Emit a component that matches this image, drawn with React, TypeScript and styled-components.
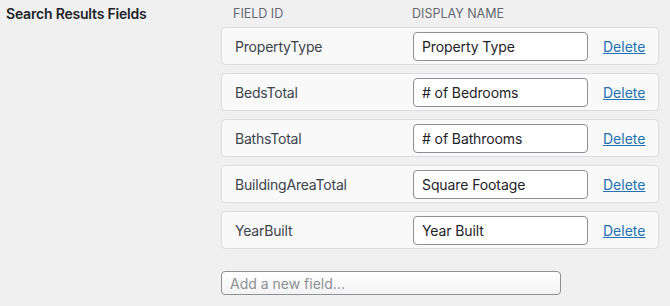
import styled, { createGlobalStyle } from 'styled-components';

const GlobalStyle = createGlobalStyle`
  html, body {
    margin: 0;
    padding: 0;
    background: #f0f0f1;
    font-family: Inter, "Noto Sans", "Liberation Sans", sans-serif;
    color: #1d2327;
  }
`;

const fields = [
  { id: 'PropertyType', name: 'Property Type' },
  { id: 'BedsTotal', name: '# of Bedrooms' },
  { id: 'BathsTotal', name: '# of Bathrooms' },
  { id: 'BuildingAreaTotal', name: 'Square Footage' },
  { id: 'YearBuilt', name: 'Year Built' },
];

export default function App() {
  return (
    <>
      <GlobalStyle />
      <Page>
        <Label>Search Results Fields</Label>
        <Fields>
          <HeaderRow>
            <HeaderCell>Field ID</HeaderCell>
            <HeaderCell>Display Name</HeaderCell>
          </HeaderRow>
          <List>
            {fields.map((f) => (
              <FieldRow key={f.id}>
                <FieldId>{f.id}</FieldId>
                <NameInput defaultValue={f.name} />
                <DeleteLink href="#">Delete</DeleteLink>
              </FieldRow>
            ))}
          </List>
          <AddInput placeholder="Add a new field..." />
        </Fields>
      </Page>
    </>
  );
}

const Page = styled.div`
  display: grid;
  grid-template-columns: 221px 438px;
`;

const Label = styled.div`
  padding: 5px 0 0 6px;
  font-size: 14px;
  font-weight: 600;
  line-height: 18px;
  letter-spacing: -0.2px;
  color: #1d2327;
`;

const Fields = styled.div`
  display: flex;
  flex-direction: column;
`;

const HeaderRow = styled.div`
  display: grid;
  grid-template-columns: 179px auto;
  padding-left: 12px;
  height: 27px;
  align-items: center;
  padding-bottom: 1px;
  box-sizing: border-box;
`;

const HeaderCell = styled.div`
  font-size: 12.5px;
  text-transform: uppercase;
  color: #646970;
`;

const List = styled.div`
  display: flex;
  flex-direction: column;
  gap: 8px;
`;

const FieldRow = styled.div`
  box-sizing: border-box;
  height: 38px;
  display: grid;
  grid-template-columns: 163px 175px auto;
  align-items: center;
  column-gap: 15px;
  padding-left: 13px;
  background: #f9f9f9;
  border: 1px solid #dcdcde;
  border-radius: 4px;
`;

const FieldId = styled.span`
  font-size: 14px;
  letter-spacing: -0.2px;
  color: #3c434a;
`;

const NameInput = styled.input`
  box-sizing: border-box;
  width: 175px;
  height: 29px;
  padding: 0 8px;
  font-family: inherit;
  font-size: 14px;
  letter-spacing: -0.1px;
  color: #1d2327;
  background: #fff;
  border: 1px solid #8c8f94;
  border-radius: 4px;
  outline: none;
`;

const DeleteLink = styled.a`
  font-size: 14px;
  color: #2271b1;
  text-decoration: underline;
`;

const AddInput = styled.input`
  box-sizing: border-box;
  margin-top: 22px;
  width: 340px;
  height: 24px;
  padding: 0 8px;
  font-family: inherit;
  font-size: 14px;
  color: #1d2327;
  background: linear-gradient(#ffffff, #f3f3f4);
  border: 1px solid #8c8f94;
  border-radius: 4px;
  outline: none;

  &::placeholder {
    color: #8c8f94;
  }
`;
